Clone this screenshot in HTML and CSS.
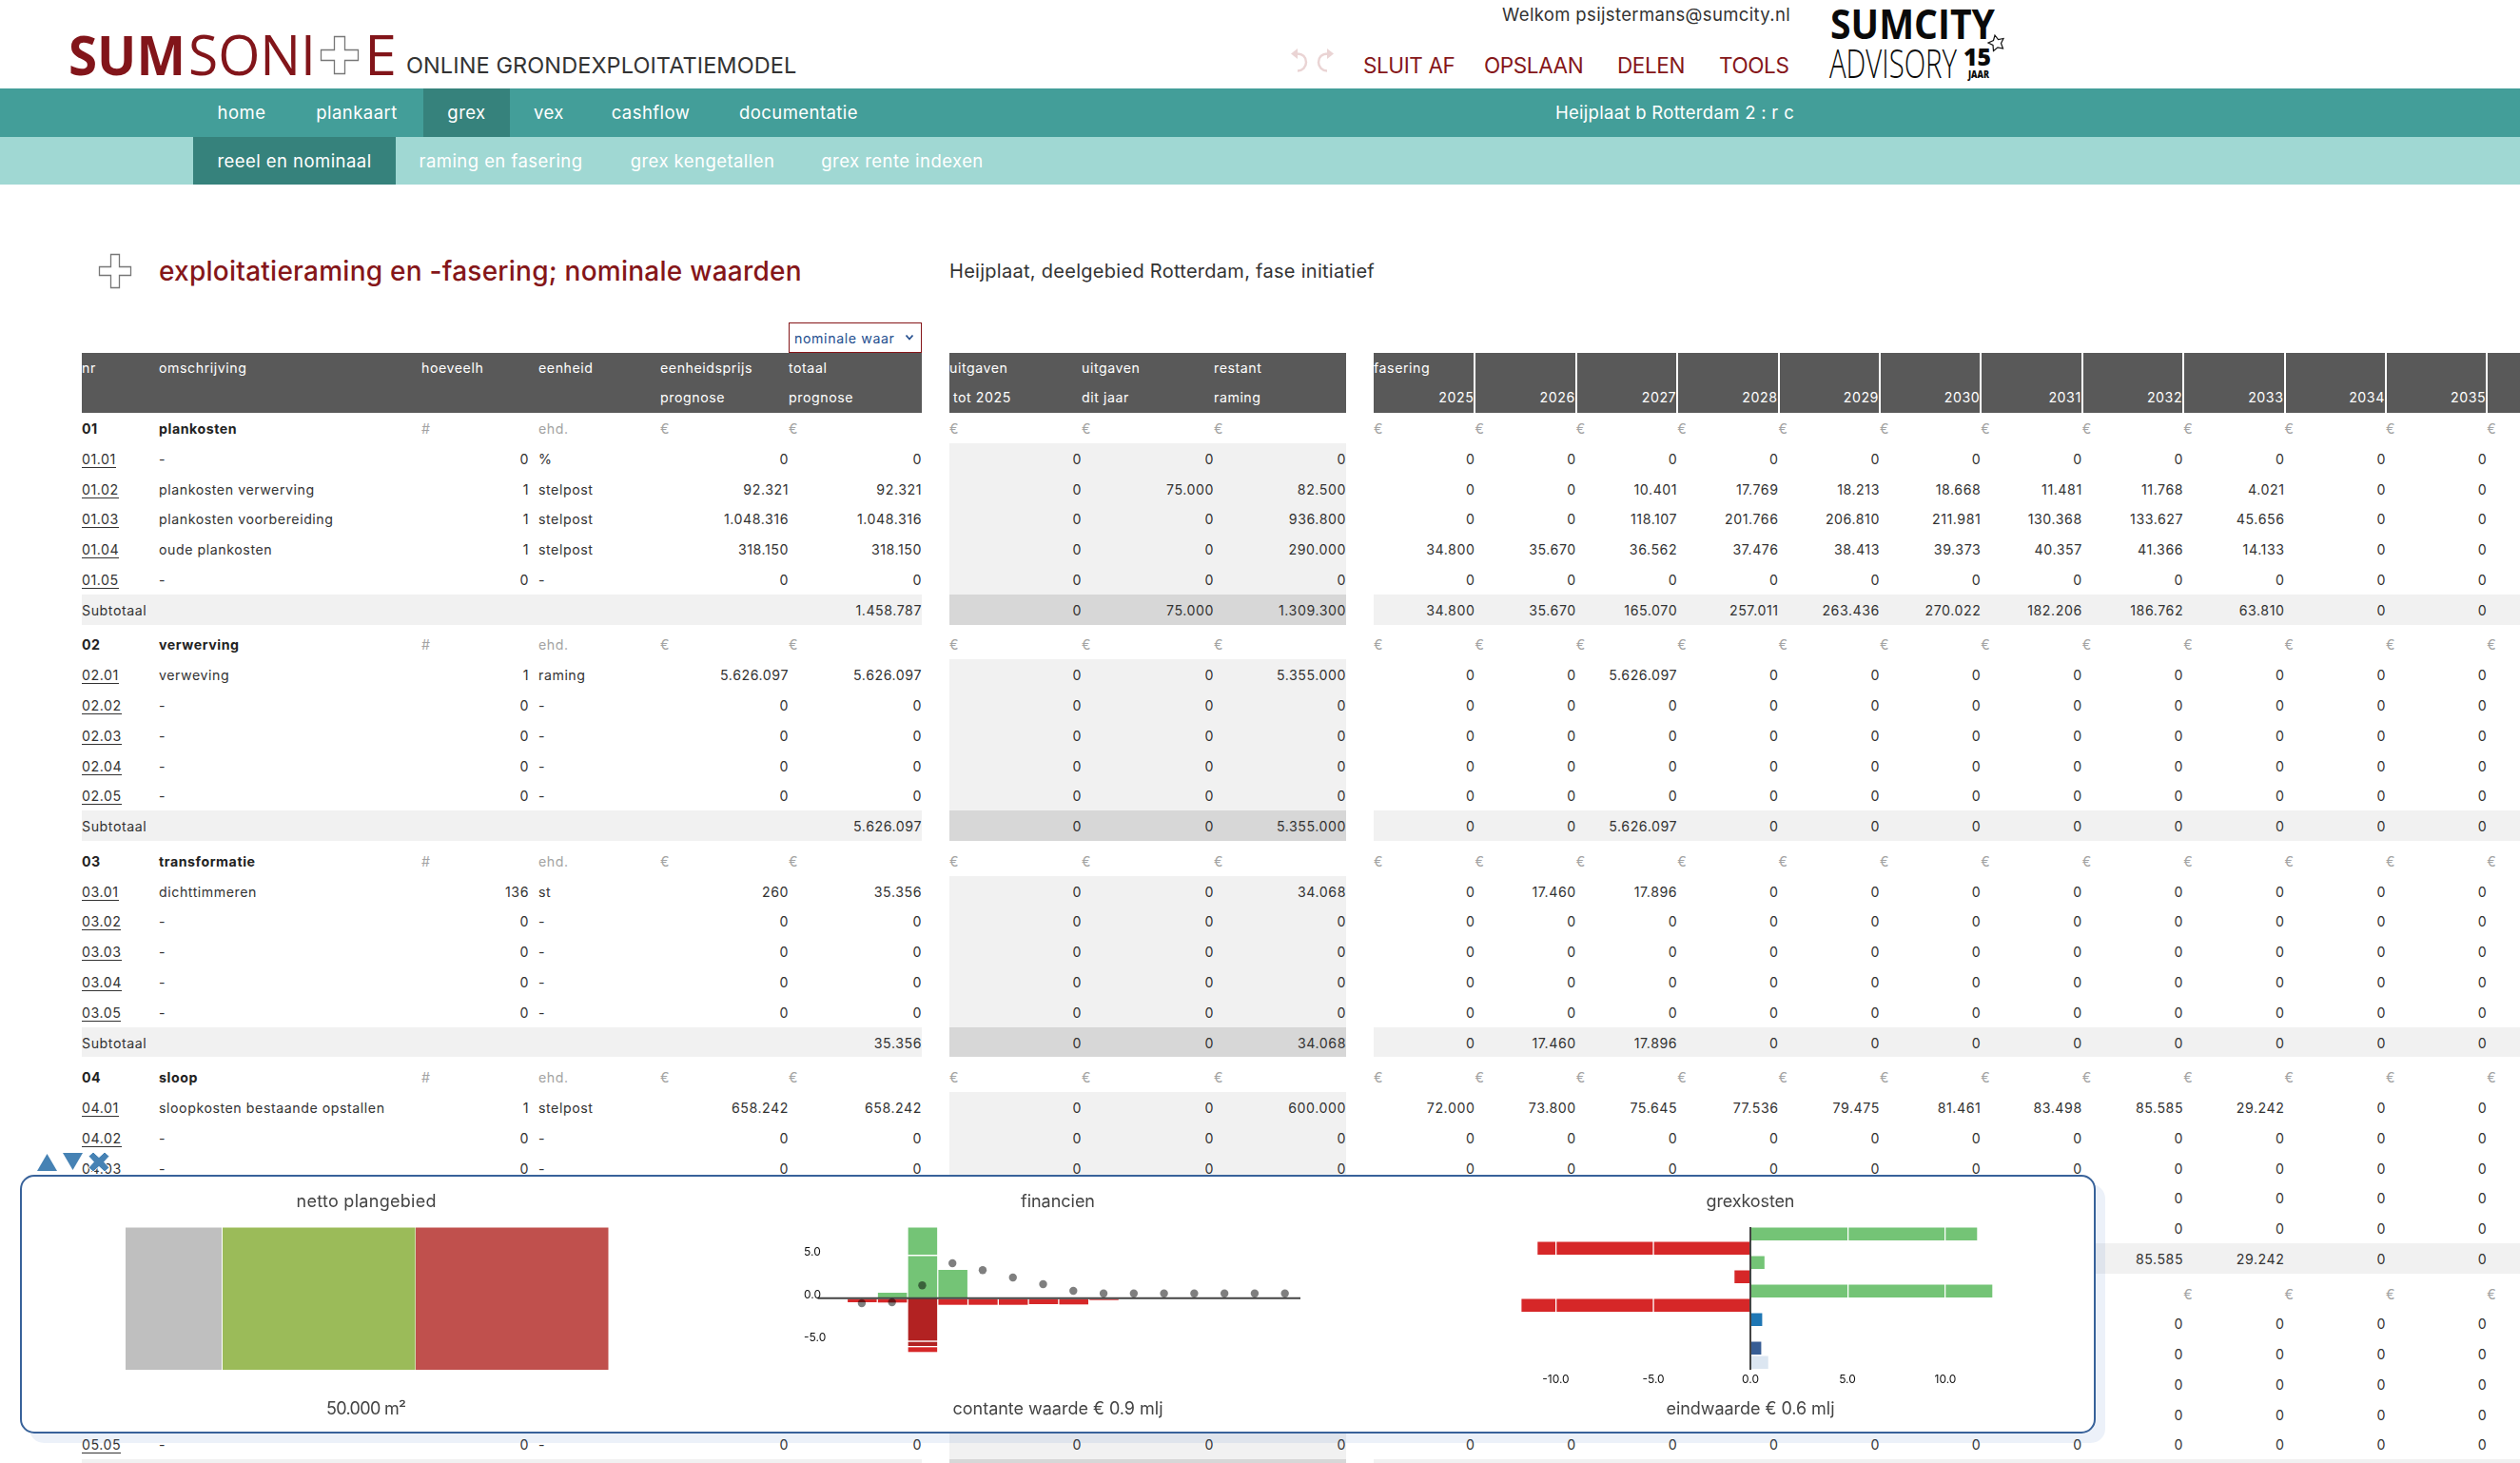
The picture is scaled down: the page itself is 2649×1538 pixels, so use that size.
FILE: index.html
```html
<!DOCTYPE html>
<html lang="nl">
<head>
    <meta charset="UTF-8">
    <meta name="viewport" content="width=device-width, initial-scale=1.0">
    <title>Sumsonite - grex</title>
    <link rel="stylesheet" href="styles.css">
</head>
<body>
    <header class="header">
        <svg class="logo" width="344" height="60" viewBox="0 0 344 60">
            <text class="logo-bold" x="0" y="51" textLength="123" lengthAdjust="spacingAndGlyphs">SUM</text>
            <text class="logo-light" x="126" y="51" textLength="134" lengthAdjust="spacingAndGlyphs">SONI</text>
            <path class="cross" d="M279.5 10.5h11v14h14v11h-14v14h-11v-14h-14v-11h14z"/>
            <text class="logo-light" x="311" y="51" textLength="34" lengthAdjust="spacingAndGlyphs">E</text>
        </svg>
        <div class="slogan">ONLINE GRONDEXPLOITATIEMODEL</div>
        <div class="user">
            <div class="welcome">Welkom psijstermans@sumcity.nl</div>
            <div class="menu">
                <svg class="undo" width="50" height="28" viewBox="0 0 50 28">
                    <path class="undo-line" d="M7 6.5c7 0 10 4 10 9s-4 9-9 9"/>
                    <path class="undo-head" d="M1 6.500 8 1v11z"/>
                    <path class="undo-line" d="M40 6.500c-7 0-10 4-10 9s4 9 9 9"/>
                    <path class="undo-head" d="M46 6.500 39 1v11z"/>
                </svg>
                <a class="menu-item sluit" href="#">SLUIT AF</a>
                <a class="menu-item opslaan" href="#">OPSLAAN</a>
                <a class="menu-item delen" href="#">DELEN</a>
                <a class="menu-item tools" href="#">TOOLS</a>
            </div>
        </div>
        <svg class="sumcity" width="190" height="90" viewBox="0 0 190 90">
            <text class="sumcity-bold" x="4" y="41" textLength="173" lengthAdjust="spacingAndGlyphs">SUMCITY</text>
            <text class="sumcity-light" x="3" y="82" textLength="134" lengthAdjust="spacingAndGlyphs">ADVISORY</text>
            <text class="sumcity-15" x="144" y="69" textLength="29" lengthAdjust="spacingAndGlyphs">15</text>
            <text class="sumcity-jaar" x="149" y="82" textLength="22" lengthAdjust="spacingAndGlyphs">JAAR</text>
            <path class="star" d="M177 37l3.500 4.500 5.500-1-2.500 5 2 5.500-5.500-1.200-4.500 3.700-.5-6-5-2.500 5.500-2.500z"/>
        </svg>
    </header>

    <nav class="nav">
        <a href="#">home</a>
        <a href="#">plankaart</a>
        <a href="#" class="active">grex</a>
        <a href="#">vex</a>
        <a href="#">cashflow</a>
        <a href="#">documentatie</a>
        <span class="project">Heijplaat b Rotterdam 2 : r c</span>
    </nav>
    <nav class="subnav">
        <a href="#" class="active">reeel en nominaal</a>
        <a href="#">raming en fasering</a>
        <a href="#">grex kengetallen</a>
        <a href="#">grex rente indexen</a>
    </nav>

    <main>
        <div class="title-row">
            <svg class="title-cross" width="36" height="38" viewBox="0 0 36 38">
                <path class="cross" d="M13.500 1.500h9v13h12v9h-12v13h-9v-13h-12v-9h12z"/>
            </svg>
            <h1>exploitatieraming en -fasering; nominale waarden</h1>
            <div class="subtitle">Heijplaat, deelgebied Rotterdam, fase initiatief</div>
        </div>

        <div class="select-row">
            <div class="select">
                <span>nominale waar</span>
                <svg width="10" height="8" viewBox="0 0 10 8"><path d="M1.500 1.500 5 5.500l3.500-4"/></svg>
            </div>
        </div>

        <div class="tables">
            <section class="table raming" id="raming">
                <div class="thead">
                    <div>nr</div>
                    <div>omschrijving</div>
                    <div>hoeveelh</div>
                    <div>eenheid</div>
                    <div>eenheidsprijs<br>prognose</div>
                    <div>totaal<br>prognose</div>
                </div>
            </section>
            <section class="table uitgaven" id="uitgaven">
                <div class="thead">
                    <div>uitgaven<br><span class="indent">tot 2025</span></div>
                    <div>uitgaven<br>dit jaar</div>
                    <div>restant<br>raming</div>
                </div>
            </section>
            <section class="table fasering" id="fasering">
                <div class="thead" id="years"></div>
            </section>
        </div>
    </main>

    <div class="panel-buttons">
        <svg width="80" height="24" viewBox="0 0 80 24">
            <path d="M1 21 11.500 3 22 21z"/>
            <path d="M28 2h21L38.500 20z"/>
            <path class="close" d="M60 1l6 5.500L72 1l5 4.500-5.500 6 5.500 6-5 4.500-6-5.500-6 5.500-5-4.500 5.500-6-5.500-6z"/>
        </svg>
    </div>

    <div class="panel">
        <svg class="chart" viewBox="1 1 727 270">
            <text class="chart-title" x="363" y="33" textLength="147">netto plangebied</text>
            <rect x="110" y="54.500" width="101" height="149.500" fill="#bfbfbf"/>
            <rect x="212" y="54.500" width="202.500" height="149.500" fill="#9bbb59"/>
            <rect x="415" y="54.500" width="202.500" height="149.500" fill="#c0504d"/>
            <text class="chart-title" x="363" y="251" textLength="84">50.000 m²</text>
        </svg>
        <svg class="chart" viewBox="1 1 727 270">
            <text class="chart-title" x="363" y="33" textLength="78">financien</text>
            <g id="bars"></g>
            <path class="axis" d="M110.500 128.700H618"/>
            <g id="dots"></g>
            <text class="tick start" x="96" y="84">5.0</text>
            <text class="tick start" x="96" y="129">0.0</text>
            <text class="tick start" x="96" y="174">-5.0</text>
            <text class="chart-title" x="363" y="251" textLength="221">contante waarde € 0.9 mlj</text>
        </svg>
        <svg class="chart" viewBox="1 1 727 270">
            <text class="chart-title" x="364" y="33" textLength="93">grexkosten</text>
            <g id="kosten"></g>
            <path class="axis" d="M364 54V204"/>
            <text class="tick" x="159.500" y="218">-10.0</text>
            <text class="tick" x="262" y="218">-5.0</text>
            <text class="tick" x="364" y="218">0.0</text>
            <text class="tick" x="466" y="218">5.0</text>
            <text class="tick" x="569" y="218">10.0</text>
            <text class="chart-title" x="364" y="251" textLength="177">eindwaarde € 0.6 mlj</text>
        </svg>
    </div>

    <script src="script.js"></script>
</body>
</html>
```
FILE: styles.css
```css
* {
    box-sizing: border-box;
}

body {
    margin: 0;
    height: 1538px;
    overflow: hidden;
    background-color: #fff;
    color: #333;
    font-family: Inter, "Open Sans", sans-serif;
    font-size: 14.2px;
}

a {
    color: inherit;
    text-decoration: none;
}

/* Header */
.header {
    display: flex;
    height: 93px;
    padding-left: 72px;
}

.logo {
    flex: none;
    margin-top: 28px;
    overflow: visible;
}

.logo text {
    font-family: "Open Sans", sans-serif;
    font-size: 58px;
    fill: #82151a;
}

.logo .logo-bold {
    font-weight: 700;
}

.logo .logo-light {
    font-weight: 400;
}

.cross {
    fill: #fff;
    stroke: #777;
    stroke-width: 1.3;
}

.slogan {
    width: 420px;
    margin-left: 11px;
    padding-top: 54px;
    font-size: 23.5px;
    line-height: 29px;
    letter-spacing: 0.1px;
    white-space: nowrap;
}

.user {
    width: 1035px;
    color: #333;
    text-align: right;
}

.welcome {
    height: 54px;
    padding-top: 3px;
    font-size: 18.5px;
    line-height: 24px;
    letter-spacing: 0.35px;
}

.menu {
    display: flex;
    justify-content: flex-end;
    color: #851619;
    font-size: 22.5px;
    line-height: 29px;
    letter-spacing: -0.4px;
    text-align: left;
    white-space: nowrap;
}

.undo {
    margin-top: -4px;
    margin-right: 27px;
}

.undo-line {
    fill: none;
    stroke: #ead4d4;
    stroke-width: 2.5;
}

.undo-head {
    fill: #ead4d4;
}

.sluit {
    width: 127px;
}

.opslaan {
    width: 140px;
}

.delen {
    width: 107px;
}

.tools {
    width: 75px;
}

.sumcity {
    margin-left: 38px;
    overflow: visible;
}

.sumcity text {
    font-family: "Open Sans", sans-serif;
    fill: #0a0a0a;
}

.sumcity .sumcity-bold {
    font-size: 43px;
    font-weight: 700;
}

.sumcity .sumcity-light {
    font-size: 43px;
    font-weight: 300;
}

.sumcity .sumcity-15 {
    font-size: 25px;
    font-weight: 800;
}

.sumcity .sumcity-jaar {
    font-size: 10px;
    font-weight: 800;
}

.star {
    fill: none;
    stroke: #111;
    stroke-width: 1.2;
}

/* Navigation */
.nav,
.subnav {
    display: grid;
    padding-left: 203px;
    color: #fff;
    font-size: 18.5px;
    letter-spacing: 0.45px;
    text-align: center;
    white-space: nowrap;
}

.nav {
    grid-template-columns: 102px 140px 91px 82px 132px 179px 957px;
    height: 51px;
    line-height: 51px;
    background-color: #439e99;
}

.subnav {
    grid-template-columns: 213px 221px 203px 217px;
    height: 50px;
    line-height: 50px;
    background-color: #a0d8d3;
}

.nav .active,
.subnav .active {
    background-color: #36827c;
}

.project {
    letter-spacing: 0.3px;
    text-align: right;
}

/* Title */
.title-row {
    display: flex;
    align-items: center;
    height: 145px;
    padding: 37px 0 0 103px;
}

.title-cross {
    flex: none;
}

h1 {
    width: 831px;
    margin: 0 0 0 28px;
    color: #851619;
    font-size: 28px;
    font-weight: 500;
    letter-spacing: 0.25px;
    white-space: nowrap;
}

.subtitle {
    font-size: 20px;
    letter-spacing: 0.28px;
    white-space: nowrap;
}

.select-row {
    display: flex;
    padding-left: 829px;
}

.select {
    display: flex;
    align-items: center;
    justify-content: space-between;
    width: 140px;
    height: 32px;
    padding: 0 7px 0 5px;
    border: 1px solid #851619;
    color: #254f8f;
    letter-spacing: 0.6px;
    white-space: nowrap;
}

.select path {
    fill: none;
    stroke: #254f8f;
    stroke-width: 1.8;
}

/* Tables */
.tables {
    display: flex;
    gap: 29px;
    padding-left: 86px;
    letter-spacing: 0.55px;
    white-space: nowrap;
}

.table {
    flex: none;
}

.thead,
.row {
    display: grid;
}

.raming .thead,
.raming .row {
    grid-template-columns: 81px 276px 123px 128px 135px 140px;
}

.uitgaven .thead,
.uitgaven .row {
    grid-template-columns: repeat(3, 139px);
}

.fasering .thead,
.fasering .row {
    grid-template-columns: repeat(12, 106.4px);
}

.thead {
    height: 63px;
    background-color: #595959;
    color: #fff;
    line-height: 31px;
}

.fasering .thead div {
    margin-right: -1px;
    border-right: 2px solid #fff;
    text-align: right;
}

.fasering .first {
    display: block;
    text-align: left;
}

.thead .indent {
    padding-left: 4px;
}

.row {
    height: 31.8px;
    line-height: 33px;
}

.row.head {
    color: #a3a3a3;
}

.subtotal + .head {
    margin-top: 4.8px;
}

.row .name {
    color: #222;
    font-weight: 700;
}

.row .num {
    text-align: right;
}

.row .amount {
    padding-right: 10px;
    text-align: right;
}

.row .nr {
    justify-self: start;
    height: 26px;
    border-bottom: 1px solid #333;
}

.uitgaven .row {
    background-color: #f1f1f1;
}

.uitgaven .head {
    background-color: transparent;
}

.row.subtotal {
    background-color: #f1f1f1;
}

.uitgaven .row.subtotal {
    background-color: #d7d7d7;
}

/* Charts panel */
.panel-buttons {
    position: fixed;
    top: 1210px;
    left: 38px;
    fill: #4682b4;
}

.panel-buttons .close {
    stroke: #fff;
    stroke-width: 1;
}

.panel {
    position: fixed;
    top: 1235px;
    left: 21px;
    display: flex;
    width: 2182px;
    height: 272px;
    border: 2px solid #38629a;
    border-radius: 15px;
    background-color: #fff;
    box-shadow: 10px 10px 0 rgba(68, 114, 196, 0.1);
}

.chart {
    flex: none;
    width: 727px;
    height: 270px;
}

.chart-title {
    fill: #444;
    font-size: 18px;
    text-anchor: middle;
}

.tick {
    fill: #111;
    font-size: 12px;
    text-anchor: middle;
}

.tick.start {
    text-anchor: start;
}

.axis {
    fill: none;
    stroke: #444;
    stroke-width: 2;
}
```
FILE: script.js
```js
const firstYear = 2025;
const yearCount = 12;

// [omschrijving, hoeveelheid, eenheid, prijs, totaal, uitgaven, fasering]
const empty = ['-', '0', '-', '0', '0', ['0', '0', '0'], []];

const groups = [
    {
        nr: '01',
        name: 'plankosten',
        rows: [
            ['-', '0', '%', '0', '0', ['0', '0', '0'], []],
            ['plankosten verwerving', '1', 'stelpost', '92.321', '92.321', ['0', '75.000', '82.500'],
                ['0', '0', '10.401', '17.769', '18.213', '18.668', '11.481', '11.768', '4.021']],
            ['plankosten voorbereiding', '1', 'stelpost', '1.048.316', '1.048.316', ['0', '0', '936.800'],
                ['0', '0', '118.107', '201.766', '206.810', '211.981', '130.368', '133.627', '45.656']],
            ['oude plankosten', '1', 'stelpost', '318.150', '318.150', ['0', '0', '290.000'],
                ['34.800', '35.670', '36.562', '37.476', '38.413', '39.373', '40.357', '41.366', '14.133']],
            empty
        ],
        total: ['1.458.787', ['0', '75.000', '1.309.300'],
            ['34.800', '35.670', '165.070', '257.011', '263.436', '270.022', '182.206', '186.762', '63.810']]
    },
    {
        nr: '02',
        name: 'verwerving',
        rows: [
            ['verweving', '1', 'raming', '5.626.097', '5.626.097', ['0', '0', '5.355.000'], ['0', '0', '5.626.097']],
            empty, empty, empty, empty
        ],
        total: ['5.626.097', ['0', '0', '5.355.000'], ['0', '0', '5.626.097']]
    },
    {
        nr: '03',
        name: 'transformatie',
        rows: [
            ['dichttimmeren', '136', 'st', '260', '35.356', ['0', '0', '34.068'], ['0', '17.460', '17.896']],
            empty, empty, empty, empty
        ],
        total: ['35.356', ['0', '0', '34.068'], ['0', '17.460', '17.896']]
    },
    {
        nr: '04',
        name: 'sloop',
        rows: [
            ['sloopkosten bestaande opstallen', '1', 'stelpost', '658.242', '658.242', ['0', '0', '600.000'],
                ['72.000', '73.800', '75.645', '77.536', '79.475', '81.461', '83.498', '85.585', '29.242']],
            empty, empty, empty, empty
        ],
        total: ['658.242', ['0', '0', '600.000'],
            ['72.000', '73.800', '75.645', '77.536', '79.475', '81.461', '83.498', '85.585', '29.242']]
    },
    {
        nr: '05',
        name: '',
        rows: [empty, empty, empty, empty, empty],
        total: ['0', ['0', '0', '0'], []]
    }
];

function addRow(id, type, html) {
    document.getElementById(id).insertAdjacentHTML('beforeend', `<div class="row ${type}">${html}</div>`);
}

function nums(values) {
    return values.map(v => `<div class="num">${v}</div>`).join('');
}

function years(values) {
    return nums(Array.from({ length: yearCount }, (_, i) => values[i] || '0'));
}

let yearHtml = '';
for (let i = 0; i < yearCount; i++) {
    yearHtml += `<div><span class="first">${i === 0 ? 'fasering' : '&nbsp;'}</span>${firstYear + i}</div>`;
}
document.getElementById('years').innerHTML = yearHtml;

groups.forEach(group => {
    addRow('raming', 'head', `<div class="name">${group.nr}</div><div class="name">${group.name}</div>
        <div>#</div><div>ehd.</div><div>€</div><div>€</div>`);
    addRow('uitgaven', 'head', '<div>€</div>'.repeat(3));
    addRow('fasering', 'head', '<div>€</div>'.repeat(yearCount));

    group.rows.forEach((row, i) => {
        const [name, amount, unit, price, total, spent, phases] = row;
        addRow('raming', '', `<a class="nr" href="#">${group.nr}.0${i + 1}</a><div>${name}</div>
            <div class="amount">${amount}</div><div>${unit}</div>${nums([price, total])}`);
        addRow('uitgaven', '', nums(spent));
        addRow('fasering', '', years(phases));
    });

    addRow('raming', 'subtotal', `<div>Subtotaal</div><div></div><div></div><div></div>${nums(['', group.total[0]])}`);
    addRow('uitgaven', 'subtotal', nums(group.total[1]));
    addRow('fasering', 'subtotal', years(group.total[2]));
});

// financien: [column, top, bottom, colour]
const green = '#74c476';
const red = '#d62728';
const darkRed = '#b22222';
const bars = [
    [0, 129.7, 133, red], [1, 123, 128, green], [1, 129.7, 133.3, red],
    [2, 54.5, 83, green], [2, 84.5, 128, green],
    [2, 129, 173.3, darkRed], [2, 174.7, 179, darkRed], [2, 180.3, 185.3, red],
    [3, 99, 128, green], [3, 129.7, 135.7, red], [4, 129.7, 135.7, red], [5, 129.7, 135.7, red],
    [6, 129.7, 135, red], [7, 129.7, 135.3, red], [8, 129.7, 130.7, red]
];
document.getElementById('bars').innerHTML = bars.map(([col, top, bottom, fill]) =>
    `<rect x="${142.1 + col * 31.77}" y="${top}" width="30.5" height="${bottom - top}" fill="${fill}"/>`).join('');

const dots = [134, 133, 115.3, 92, 99.3, 107, 114, 121, 123.7, 123.7, 123.7, 123.7, 123.7, 123.7, 123.7];
document.getElementById('dots').innerHTML = dots.map((y, i) =>
    `<circle cx="${156.9 + i * 31.77}" cy="${y}" r="4.2" fill="#000" fill-opacity="0.5"/>`).join('');

// grexkosten: [row, left, right, colour]
const kosten = [
    [0, 365, 466, green], [0, 467.3, 568, green], [0, 569.3, 602.3, green],
    [1, 140.3, 159, red], [1, 160.3, 261.4, red], [1, 262.7, 363.5, red],
    [2, 365, 378.8, green], [3, 347.3, 363.5, red],
    [4, 365, 466, green], [4, 467.3, 568, green], [4, 569.3, 618.3, green],
    [5, 123.4, 159, red], [5, 160.3, 261.4, red], [5, 262.7, 363.5, red],
    [6, 365, 376.4, '#1f77b4'], [8, 365, 375.4, '#385d94'], [9, 365, 382.7, '#dce6f1']
];
document.getElementById('kosten').innerHTML = kosten.map(([row, left, right, fill]) =>
    `<rect x="${left}" y="${54.5 + row * 15}" width="${right - left}" height="13.5" fill="${fill}"/>`).join('');
```
